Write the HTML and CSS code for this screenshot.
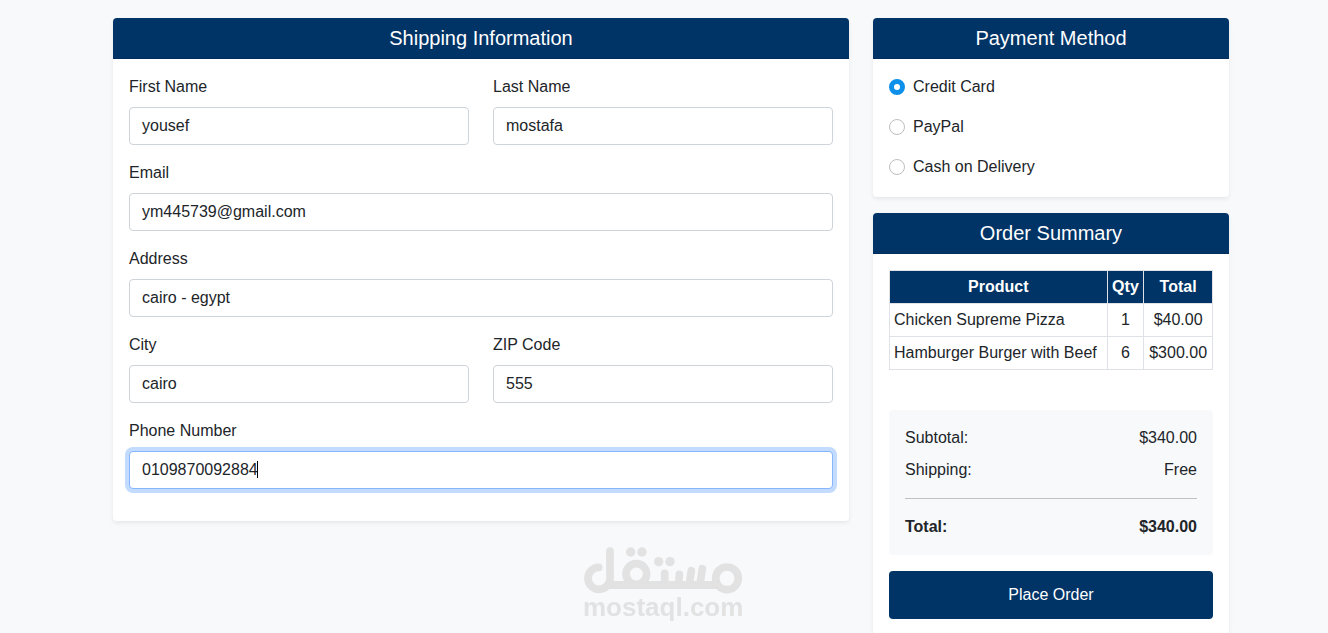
FILE: index.html
```html
<!DOCTYPE html>
<html lang="en">
<head>
  <meta charset="UTF-8">
  <meta name="viewport" content="width=device-width, initial-scale=1.0">
  <title>Checkout</title>
  <link rel="stylesheet" href="styles.css">
</head>
<body>
  <main class="container">
    <div class="row">
      <!-- Shipping -->
      <div class="col-main">
        <section class="card">
          <h5 class="card-header">Shipping Information</h5>
          <form class="card-body" id="checkout-form">
            <div class="form-row">
              <div class="form-group">
                <label for="first-name">First Name</label>
                <input type="text" class="form-control" id="first-name" value="yousef" required>
              </div>
              <div class="form-group">
                <label for="last-name">Last Name</label>
                <input type="text" class="form-control" id="last-name" value="mostafa" required>
              </div>
            </div>
            <div class="form-group">
              <label for="email">Email</label>
              <input type="email" class="form-control" id="email" value="ym445739@gmail.com" required>
            </div>
            <div class="form-group">
              <label for="address">Address</label>
              <input type="text" class="form-control" id="address" value="cairo - egypt" required>
            </div>
            <div class="form-row">
              <div class="form-group">
                <label for="city">City</label>
                <input type="text" class="form-control" id="city" value="cairo" required>
              </div>
              <div class="form-group">
                <label for="zip">ZIP Code</label>
                <input type="text" class="form-control" id="zip" value="555" required>
              </div>
            </div>
            <div class="form-group">
              <label for="phone">Phone Number</label>
              <div class="phone-field">
                <input type="tel" class="form-control" id="phone" value="0109870092884" required autofocus>
                <span class="caret"></span>
              </div>
            </div>
          </form>
        </section>
      </div>

      <div class="col-side">
        <!-- Payment -->
        <section class="card">
          <h5 class="card-header">Payment Method</h5>
          <div class="card-body payment">
            <div class="form-check">
              <input type="radio" name="payment" id="credit-card" checked>
              <label for="credit-card">Credit Card</label>
            </div>
            <div class="form-check">
              <input type="radio" name="payment" id="paypal">
              <label for="paypal">PayPal</label>
            </div>
            <div class="form-check">
              <input type="radio" name="payment" id="cash">
              <label for="cash">Cash on Delivery</label>
            </div>
          </div>
        </section>

        <!-- Order summary -->
        <section class="card">
          <h5 class="card-header">Order Summary</h5>
          <div class="card-body">
            <table class="order-table">
              <thead>
                <tr><th>Product</th><th>Qty</th><th>Total</th></tr>
              </thead>
              <tbody>
                <tr><td>Chicken Supreme Pizza</td><td>1</td><td>$40.00</td></tr>
                <tr><td>Hamburger Burger with Beef</td><td>6</td><td>$300.00</td></tr>
              </tbody>
            </table>
            <div class="totals">
              <div class="totals-row"><span>Subtotal:</span><span>$340.00</span></div>
              <div class="totals-row"><span>Shipping:</span><span>Free</span></div>
              <hr>
              <div class="totals-row"><strong>Total:</strong><strong>$340.00</strong></div>
            </div>
            <button type="submit" class="btn-order" form="checkout-form">Place Order</button>
          </div>
        </section>
      </div>
    </div>
  </main>

  <div class="watermark">
    <svg viewBox="42 33 478 144" aria-hidden="true">
      <g fill="none" stroke="currentColor" stroke-width="23" stroke-linecap="round">
        <circle cx="473" cy="130" r="34"/>
        <circle cx="201" cy="117" r="31"/>
        <path d="M88 97a33 33 0 1 0 34 33V48"/>
        <path d="M108 150H444" stroke-width="24" stroke-linecap="butt"/>
        <path d="M286 115v32M330 118l-2 29M366 107l-6 40M399 101l-7 46"/>
      </g>
      <g fill="currentColor">
        <circle cx="184" cy="51" r="14"/>
        <circle cx="218" cy="51" r="14"/>
        <circle cx="268" cy="80" r="14"/>
        <circle cx="302" cy="80" r="14"/>
      </g>
    </svg>
    <span>mostaql.com</span>
  </div>

  <script>
    // put the cursor after the last digit
    const phone = document.getElementById('phone');
    phone.focus();
    phone.setSelectionRange(phone.value.length, phone.value.length);
  </script>
</body>
</html>
```
FILE: styles.css
```css
:root {
  --navy: #003366;
  --bg: #f8f9fb;
  --text: #212529;
  --border: #dee2e6;
}

* {
  box-sizing: border-box;
}

body {
  margin: 0;
  padding: 18px 0 0 14px;
  background-color: var(--bg);
  color: var(--text);
  font-family: "Liberation Sans", Arial, sans-serif;
  font-size: 16px;
  line-height: 24px;
}

/* layout */
.container {
  max-width: 1140px;
  margin: 0 auto;
}

.row {
  display: flex;
  flex-wrap: wrap;
}

.col-main,
.col-side {
  width: 100%;
  padding: 0 12px;
}

@media (min-width: 768px) {
  .col-main {
    width: 66.6667%;
  }

  .col-side {
    width: 33.3333%;
  }
}

/* cards */
.card {
  margin-bottom: 16px;
  background-color: #fff;
  border-radius: 4px;
  box-shadow: 0 2px 4px rgba(0, 0, 0, 0.075);
}

.col-side .card:last-child {
  margin-bottom: 0;
}

.card-header {
  margin: 0;
  padding: 8px 16px;
  background-color: var(--navy);
  border-bottom: 1px solid #002e5c;
  border-radius: 4px 4px 0 0;
  color: #fff;
  font-size: 20px;
  font-weight: 400;
  text-align: center;
}

.card-body {
  padding: 16px;
}

/* form */
.form-row {
  display: grid;
  grid-template-columns: 1fr 1fr;
  column-gap: 24px;
}

.form-group {
  margin-bottom: 16px;
}

.form-group label {
  display: block;
  margin-bottom: 8px;
}

.form-control {
  display: block;
  width: 100%;
  height: 38px;
  padding: 6px 12px;
  background-color: #fff;
  border: 1px solid #ced4da;
  border-radius: 4px;
  color: var(--text);
  font: inherit;
}

.form-control:focus {
  border-color: #86b7fe;
  outline: 0;
  box-shadow: 0 0 0 4px #c2dbfe;
}

/* cursor after the 13 digits of the phone number */
.phone-field {
  position: relative;
}

.phone-field .form-control {
  caret-color: transparent;
}

.caret {
  display: none;
  position: absolute;
  top: 10px;
  left: calc(12px + 13ch);
  width: 1px;
  height: 17px;
  background-color: #000;
}

.form-control:focus + .caret {
  display: block;
}

/* payment */
.payment {
  padding-bottom: 18px;
}

.form-check {
  display: flex;
  align-items: center;
  gap: 8px;
}

.form-check + .form-check {
  margin-top: 16px;
}

.form-check input {
  appearance: none;
  width: 16px;
  height: 16px;
  margin: 0;
  background-color: #fff;
  border: 1px solid #bfbfbf;
  border-radius: 50%;
}

.form-check input:checked {
  border: 5px solid #0d8fea;
}

/* table */
.order-table {
  width: 100%;
  margin-bottom: 40px;
  border-collapse: collapse;
  text-align: center;
}

.order-table th,
.order-table td {
  padding: 4px;
  border: 1px solid var(--border);
}

.order-table th {
  background-color: var(--navy);
  color: #fff;
}

.order-table td:first-child {
  text-align: left;
}

/* totals */
.totals {
  margin-bottom: 16px;
  padding: 16px;
  background-color: var(--bg);
  border-radius: 4px;
}

.totals-row {
  display: flex;
  justify-content: space-between;
}

.totals-row + .totals-row {
  margin-top: 8px;
}

.totals hr {
  margin: 16px 0;
  border: 0;
  border-top: 1px solid #c0c1c4;
}

.btn-order {
  display: block;
  width: 100%;
  padding: 12px;
  background-color: var(--navy);
  border: 0;
  border-radius: 4px;
  color: #fff;
  font: inherit;
  cursor: pointer;
}

/* watermark */
.watermark {
  position: fixed;
  bottom: 13px;
  left: 50%;
  width: 160px;
  margin-left: -81px;
  color: #e2e2e2;
  font-size: 26px;
  font-weight: 700;
  line-height: 26px;
  pointer-events: none;
}

.watermark svg {
  display: block;
  width: 100%;
  height: 48px;
}
```
